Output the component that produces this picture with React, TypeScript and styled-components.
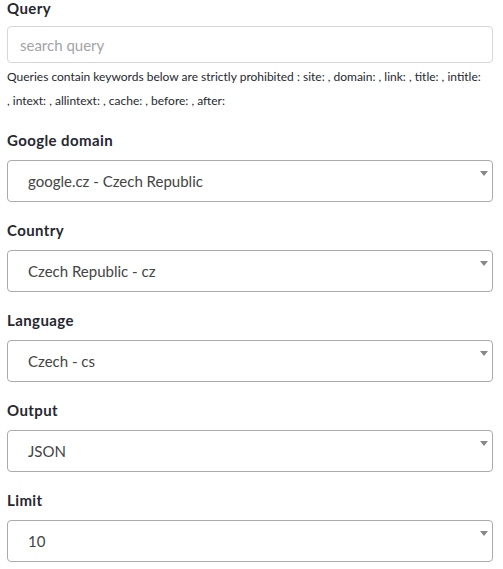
import React from "react";
import styled, { createGlobalStyle } from "styled-components";

const GlobalStyle = createGlobalStyle`
  html, body {
    margin: 0;
    padding: 0;
    background: #ffffff;
  }
  body {
    font-family: Lato, "Liberation Sans", Arial, sans-serif;
    color: #262730;
  }
`;

const Form = styled.form`
  display: flex;
  flex-direction: column;
  gap: 20px;
  width: 486px;
  padding: 0 10px 0 7px;
`;

const Field = styled.div`
  display: flex;
  flex-direction: column;
`;

const Label = styled.label`
  font-size: 15px;
  line-height: 16px;
  font-weight: 700;
  letter-spacing: 0.4px;
  color: #262730;
  margin-bottom: 10px;
`;

const TextInput = styled.input`
  box-sizing: border-box;
  height: 37px;
  width: 100%;
  padding: 0 12px;
  border: 1px solid #d6d6dc;
  border-radius: 4px;
  font-family: inherit;
  font-size: 15px;
  color: #262730;
  outline: none;

  &::placeholder {
    color: #a3a3a8;
  }
`;

const Help = styled.p`
  margin: 2px 0 -1px;
  font-size: 12px;
  line-height: 24px;
  color: #262730;
`;

const SelectWrap = styled.div`
  position: relative;
  margin-top: 2px;
`;

const Select = styled.select`
  box-sizing: border-box;
  appearance: none;
  -webkit-appearance: none;
  width: 100%;
  height: 42px;
  padding: 0 30px 0 20px;
  border: 1px solid #aaaaaa;
  border-radius: 4px;
  background: #ffffff;
  font-family: inherit;
  font-size: 15px;
  color: #444444;
  outline: none;
`;

const Caret = styled.span`
  position: absolute;
  top: 11px;
  right: 5px;
  width: 0;
  height: 0;
  border-left: 4px solid transparent;
  border-right: 4px solid transparent;
  border-top: 5px solid #888888;
  pointer-events: none;
`;

type Option = { value: string; label: string };

const fields: { id: string; label: string; options: Option[] }[] = [
  {
    id: "domain",
    label: "Google domain",
    options: [{ value: "google.cz", label: "google.cz - Czech Republic" }],
  },
  {
    id: "country",
    label: "Country",
    options: [{ value: "cz", label: "Czech Republic - cz" }],
  },
  {
    id: "language",
    label: "Language",
    options: [{ value: "cs", label: "Czech - cs" }],
  },
  {
    id: "output",
    label: "Output",
    options: [{ value: "json", label: "JSON" }],
  },
  {
    id: "limit",
    label: "Limit",
    options: [{ value: "10", label: "10" }],
  },
];

export default function App() {
  return (
    <>
      <GlobalStyle />
      <Form onSubmit={(e) => e.preventDefault()}>
        <Field>
          <Label htmlFor="query">Query</Label>
          <TextInput id="query" placeholder="search query" />
          <Help>
            Queries contain keywords below are strictly prohibited : site: ,
            domain: , link: , title: , intitle:
            <br />, intext: , allintext: , cache: , before: , after:
          </Help>
        </Field>
        {fields.map((f) => (
          <Field key={f.id}>
            <Label htmlFor={f.id}>{f.label}</Label>
            <SelectWrap>
              <Select id={f.id} defaultValue={f.options[0].value}>
                {f.options.map((o) => (
                  <option key={o.value} value={o.value}>
                    {o.label}
                  </option>
                ))}
              </Select>
              <Caret />
            </SelectWrap>
          </Field>
        ))}
      </Form>
    </>
  );
}
